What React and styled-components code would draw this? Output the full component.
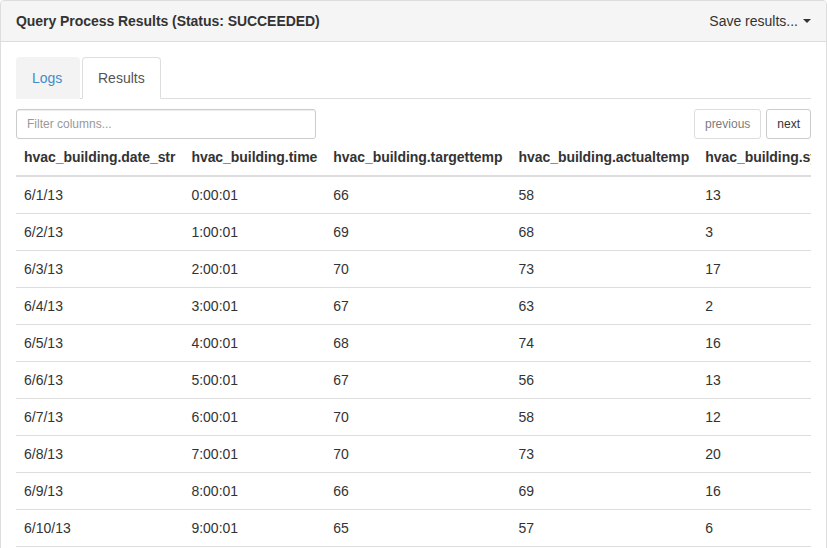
import React from "react";
import styled, { createGlobalStyle } from "styled-components";

const Global = createGlobalStyle`
  html, body { margin: 0; padding: 0; background: #fff; }
  body {
    font-family: "Liberation Sans", Arial, sans-serif;
    font-size: 14px;
    line-height: 20px;
    color: #333;
  }
  * { box-sizing: border-box; }
`;

const Panel = styled.div`
  width: 827px;
  border: 1px solid #ddd;
  border-radius: 4px;
  background: #fff;
  overflow: hidden;
  height: 560px;
`;

const Heading = styled.div`
  display: flex;
  align-items: center;
  justify-content: space-between;
  padding: 10px 15px;
  background: #f5f5f5;
  border-bottom: 1px solid #ddd;
  border-radius: 3px 3px 0 0;
`;

const Title = styled.div`
  font-weight: bold;
  font-size: 14px;
  letter-spacing: -0.05px;
`;

const SaveToggle = styled.div`
  display: flex;
  align-items: center;
  gap: 5px;
  font-size: 14px;
  color: #333;
`;

const Caret = styled.span`
  display: inline-block;
  width: 0;
  height: 0;
  border-top: 4px solid #333;
  border-left: 4px solid transparent;
  border-right: 4px solid transparent;
`;

const Body = styled.div`
  padding: 15px;
`;

const Tabs = styled.ul`
  display: flex;
  list-style: none;
  margin: 0;
  padding: 0;
  border-bottom: 1px solid #ddd;
`;

const Tab = styled.li`
  margin-right: 2px;
  margin-bottom: -1px;
  padding: 10px 15px;
  min-width: ${(p) => (p.$active ? "auto" : "64px")};
  border: 1px solid ${(p) => (p.$active ? "#ddd" : "transparent")};
  border-bottom-color: ${(p) => (p.$active ? "#fff" : "transparent")};
  border-radius: 4px 4px 0 0;
  background: ${(p) => (p.$active ? "#fff" : "#f3f3f3")};
  color: ${(p) => (p.$active ? "#555" : "#428bca")};
  font-size: 14px;
  line-height: 20px;
`;

const Toolbar = styled.div`
  display: flex;
  justify-content: space-between;
  align-items: center;
  margin-top: 10px;
`;

const Filter = styled.input`
  width: 300px;
  height: 30px;
  padding: 5px 10px;
  font-family: inherit;
  font-size: 12px;
  line-height: 18px;
  border: 1px solid #ccc;
  border-radius: 3px;
  color: #555;
  box-shadow: inset 0 1px 1px rgba(0, 0, 0, 0.075);
  &::placeholder { color: #999; }
`;

const Pager = styled.div`
  display: flex;
  gap: 5px;
`;

const Btn = styled.button`
  height: 30px;
  padding: 5px 10px;
  font-family: inherit;
  font-size: 12px;
  line-height: 18px;
  background: #fff;
  border: 1px solid #ccc;
  border-radius: 3px;
  color: #333;
  opacity: ${(p) => (p.disabled ? 0.65 : 1)};
`;

const TableWrap = styled.div`
  overflow: hidden;
  width: 795px;
`;

const Table = styled.table`
  border-collapse: collapse;
  border-spacing: 0;
`;

const Th = styled.th`
  text-align: left;
  font-weight: bold;
  white-space: nowrap;
  padding: 8px;
  line-height: 20px;
  letter-spacing: -0.05px;
  border-bottom: 2px solid #ddd;
`;

const Td = styled.td`
  white-space: nowrap;
  padding: 8px;
  line-height: 20px;
  border-top: 1px solid #ddd;
`;

const columns = [
  "hvac_building.date_str",
  "hvac_building.time",
  "hvac_building.targettemp",
  "hvac_building.actualtemp",
  "hvac_building.system",
  "hvac_building.systemage",
];

const rows = [
  ["6/1/13", "0:00:01", "66", "58", "13", "20"],
  ["6/2/13", "1:00:01", "69", "68", "3", "20"],
  ["6/3/13", "2:00:01", "70", "73", "17", "20"],
  ["6/4/13", "3:00:01", "67", "63", "2", "23"],
  ["6/5/13", "4:00:01", "68", "74", "16", "9"],
  ["6/6/13", "5:00:01", "67", "56", "13", "28"],
  ["6/7/13", "6:00:01", "70", "58", "12", "24"],
  ["6/8/13", "7:00:01", "70", "73", "20", "26"],
  ["6/9/13", "8:00:01", "66", "69", "16", "9"],
  ["6/10/13", "9:00:01", "65", "57", "6", "5"],
  ["6/11/13", "10:00:01", "67", "70", "10", "17"],
];

export default function App() {
  return (
    <>
      <Global />
      <Panel>
        <Heading>
          <Title>Query Process Results (Status: SUCCEEDED)</Title>
          <SaveToggle>
            Save results... <Caret />
          </SaveToggle>
        </Heading>
        <Body>
          <Tabs>
            <Tab>Logs</Tab>
            <Tab $active>Results</Tab>
          </Tabs>
          <Toolbar>
            <Filter placeholder="Filter columns..." />
            <Pager>
              <Btn disabled>previous</Btn>
              <Btn>next</Btn>
            </Pager>
          </Toolbar>
          <TableWrap>
            <Table>
              <thead>
                <tr>
                  {columns.map((c) => (
                    <Th key={c}>{c}</Th>
                  ))}
                </tr>
              </thead>
              <tbody>
                {rows.map((r, i) => (
                  <tr key={i}>
                    {r.map((v, j) => (
                      <Td key={j}>{v}</Td>
                    ))}
                  </tr>
                ))}
              </tbody>
            </Table>
          </TableWrap>
        </Body>
      </Panel>
    </>
  );
}
